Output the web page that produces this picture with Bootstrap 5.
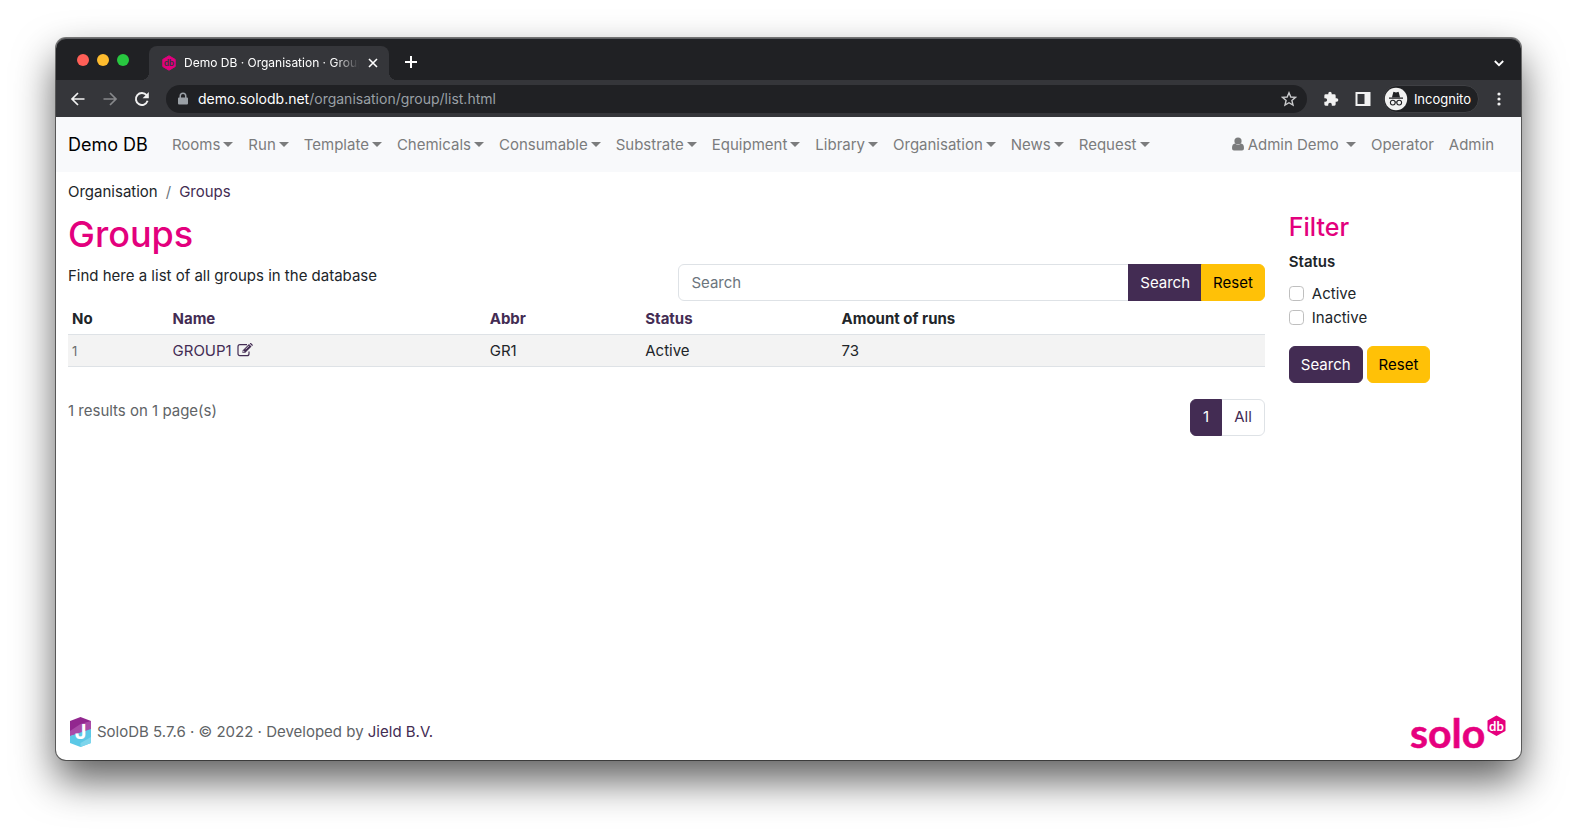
<!DOCTYPE html>
<html lang="en">
<head>
<meta charset="utf-8">
<meta name="viewport" content="width=device-width, initial-scale=1">
<title>Demo DB · Organisation · Groups</title>
<link href="https://cdn.jsdelivr.net/npm/bootstrap@5.3.0/dist/css/bootstrap.min.css" rel="stylesheet">
<style>
:root{--plum:#432c53;--pink:#e3007d}
body{font-family:Inter,"Liberation Sans",sans-serif;font-size:15px;line-height:24px;color:#212529;background:#fff}
.stage{min-height:100vh;padding:38px 56px 74px}
.window{border-radius:10px;background:#fff;box-shadow:0 0 0 1px rgba(0,0,0,.5),0 20px 40px rgba(0,0,0,.64)}
.chrome-ui{border-radius:10px 10px 0 0;background:#202124;color:#fff;box-shadow:inset 0 1px 0 #5f6063}
.chrome-ui button{border:0;background:none;padding:0;color:inherit;display:flex;align-items:center;justify-content:center}
.strip{height:42px;padding:0 14px 0 21px}
.lights{padding-bottom:14px}
.light{width:12px;height:12px;border-radius:50%}
.light-close{background:#ff5f57}.light-min{background:#febc2e}.light-max{background:#28c840}
.tab{position:relative;width:240px;height:34px;background:#35363a;border-radius:8px 8px 0 0;padding:0 10px 0 13px;font-size:12px;margin-left:20px}
.tab::before,.tab::after{content:"";position:absolute;bottom:0;width:8px;height:8px}
.tab::before{left:-8px;background:radial-gradient(circle at 0 0,transparent 8px,#35363a 8px)}
.tab::after{right:-8px;background:radial-gradient(circle at 100% 0,transparent 8px,#35363a 8px)}
.tab-title{-webkit-mask-image:linear-gradient(90deg,#000 86%,transparent);mask-image:linear-gradient(90deg,#000 86%,transparent)}
.toolbar{height:37px;background:#35363a;padding:0 14px;gap:16px}
.omnibox{height:28px;border-radius:14px;background:#202124;padding:0 10px 0 11px;gap:9px;font-size:14px;color:#9aa0a6}
.chrome-ui .incog{height:28px;border-radius:14px;background:#202124;border:1px solid #3f4044;padding-right:7px;gap:6px;font-size:13px}
.tight{margin-left:-4px}
.navbar{background:#f8f9fb;--bs-navbar-color:#7b7c7d;--bs-navbar-hover-color:#555;padding:8px 0 7px}
.navbar-brand{font-size:18px}
.navbar-expand .navbar-nav .nav-link{padding:8px 7px 8px 8px}
.dropdown-toggle::after{margin-left:3px;border-width:5px 5px 0;vertical-align:3px}
a.plum{color:var(--plum);text-decoration:none}
h1,h3{color:var(--pink)}
h1{font-size:36px;line-height:48px;margin-bottom:6px}
h3{font-size:25px;line-height:35px;margin-bottom:5px}
.breadcrumb{--bs-breadcrumb-margin-bottom:6px;padding-top:8px;--bs-breadcrumb-divider-color:#6c757d}
.btn,.form-control,.page-link{font-size:15px;line-height:24px;height:37px;padding:5px 12px}
.btn{padding:5px 11px}
.form-control::placeholder{color:#6c757d}
.btn-plum{--bs-btn-color:#fff;--bs-btn-bg:#432c53;--bs-btn-border-color:#432c53;--bs-btn-hover-bg:#35223f;--bs-btn-hover-color:#fff}
.table{--bs-table-striped-bg:#f3f3f3;margin-bottom:32px}
.table th{font-weight:650}
.table>thead>tr>th{height:33px;padding:5px 4px 3px}
.table>tbody>tr>td{height:32px;padding:4px 4px 3px}
.edit-icon{margin:0 0 2px 1px}
.num{font-size:13px;color:#6c6d6e}
.c-no{width:8.4%}.c-name{width:26.5%}.c-abbr{width:13%}.c-status{width:16.4%}
.grey{color:#606366}
.pagination{--bs-pagination-color:#432c53;--bs-pagination-active-bg:#432c53;--bs-pagination-active-border-color:#432c53}
.form-check{min-height:24px;margin-bottom:0;padding-left:23px}
.form-check .form-check-input{width:15px;height:15px;margin:4px 0 0 -23px;border-color:#bfbfbf}
.footer-bar{padding-bottom:10px}
</style>
</head>
<body>
<div class="stage d-flex flex-column">
<div class="window flex-grow-1 d-flex flex-column">
  <header class="chrome-ui">
    <div class="strip d-flex align-items-end">
      <div class="lights d-flex gap-2"><span class="light light-close"></span><span class="light light-min"></span><span class="light light-max"></span></div>
      <div class="tab d-flex align-items-center">
        <svg class="flex-shrink-0 me-2" width="14" height="16" viewBox="0 0 14 16"><path d="M7 .8 13.2 4.4V11.6L7 15.2.8 11.6V4.4Z" fill="#e3007d" stroke="#e3007d" stroke-linejoin="round"/><text x="7" y="11.2" text-anchor="middle" font-family="Lato" font-weight="700" font-size="9" fill="#35363a">db</text></svg>
        <span class="tab-title flex-grow-1 text-nowrap overflow-hidden">Demo DB · Organisation · Groups</span>
        <button class="ms-2" aria-label="Close tab"><svg width="12" height="12" viewBox="0 0 12 12" stroke="#fff" stroke-width="1.6"><path d="m2 2 8 8M10 2 2 10"/></svg></button>
      </div>
      <button class="ms-3 pb-2 mb-1" aria-label="New tab"><svg width="12" height="12" viewBox="0 0 12 12" stroke="#fff" stroke-width="2"><path d="M6 0v12M0 6h12"/></svg></button>
      <button class="ms-auto pb-2 mb-1" aria-label="Search tabs"><svg width="16" height="12" viewBox="0 0 16 12" fill="none" stroke="#fff" stroke-width="1.8"><path d="m3.800 5 4.200 4.200L12.200 5"/></svg></button>
    </div>
    <div class="toolbar d-flex align-items-center">
      <button aria-label="Back"><svg width="16" height="16" viewBox="0 0 16 16" fill="none" stroke="#f1f1f1" stroke-width="1.7"><path d="M14.500 8H2.500M8 2 2 8l6 6"/></svg></button>
      <button aria-label="Forward"><svg width="16" height="16" viewBox="0 0 16 16" fill="none" stroke="#87888b" stroke-width="1.7"><path d="M1.500 8h12M8 2l6 6-6 6"/></svg></button>
      <button aria-label="Reload"><svg width="16" height="16" viewBox="0 0 16 16" fill="none" stroke="#f1f1f1" stroke-width="1.9"><path d="M13.600 9.800A6 6 0 1 1 12.600 4.200"/><path d="M14.800 1v6.200H8.600Z" fill="#f1f1f1" stroke="none"/></svg></button>
      <div class="omnibox flex-grow-1 d-flex align-items-center">
        <svg width="12" height="14" viewBox="0 0 12 14"><path d="M2.500 5.500V4a3.500 3.500 0 0 1 7 0v1.500h.5q1 0 1 1v5q0 1-1 1H2q-1 0-1-1v-5q0-1 1-1Zm1.500 0h4V4a2 2 0 0 0-4 0Z" fill="#9aa0a6" fill-rule="evenodd"/></svg>
        <span class="flex-grow-1"><span class="text-white">demo.solodb.net</span>/organisation/group/list.html</span>
        <button aria-label="Bookmark"><svg width="16" height="16" viewBox="0 0 16 16" fill="none" stroke="#c9cacc" stroke-width="1.4"><path d="m8 1.800 1.800 4.200 4.700.4-3.600 3.100 1.100 4.600L8 11.700l-4 2.400 1.100-4.600L1.500 6.400 6.200 6Z"/></svg></button>
      </div>
      <button aria-label="Extensions"><svg width="16" height="16" viewBox="0 0 24 24" fill="#f1f1f1"><path d="M20.500 11H19V7a2 2 0 0 0-2-2h-4V3.500a2.500 2.500 0 0 0-5 0V5H4a2 2 0 0 0-2 2v3.800h1.500a2.700 2.700 0 0 1 0 5.400H2V20a2 2 0 0 0 2 2h3.800v-1.500a2.700 2.700 0 0 1 5.400 0V22H17a2 2 0 0 0 2-2v-4h1.500a2.500 2.500 0 0 0 0-5Z"/></svg></button>
      <button aria-label="Side panel"><svg width="16" height="16" viewBox="0 0 16 16"><path fill="#f1f1f1" fill-rule="evenodd" d="M.5 1h15v14H.5ZM2.500 3v10h7V3Z"/></svg></button>
      <button class="tight incog"><svg width="24" height="26" viewBox="1 0 24 26"><circle cx="13" cy="13" r="11.200" fill="#f1f1f1"/><g fill="#202124"><path d="m9 11.200 1.200-4.800q.2-.8 1-.5l1.800.5 1.800-.5q.8-.3 1 .5l1.200 4.800ZM6 11.500h14v1.200H6Z"/></g><g fill="none" stroke="#202124" stroke-width="1.100"><circle cx="9.800" cy="16.600" r="2.400"/><circle cx="16.200" cy="16.600" r="2.400"/><path d="M12.200 16.200q.8-.5 1.600 0"/></g></svg>Incognito</button>
      <button class="tight" aria-label="Menu"><svg width="16" height="16" viewBox="0 0 16 16" fill="#f1f1f1"><circle cx="8" cy="3" r="1.600"/><circle cx="8" cy="8" r="1.600"/><circle cx="8" cy="13" r="1.600"/></svg></button>
    </div>
  </header>

  <nav class="navbar navbar-expand">
    <div class="container-fluid">
      <a class="navbar-brand" href="#">Demo DB</a>
      <ul class="navbar-nav me-auto">
        <li class="nav-item"><a class="nav-link dropdown-toggle" href="#">Rooms</a></li>
        <li class="nav-item"><a class="nav-link dropdown-toggle" href="#">Run</a></li>
        <li class="nav-item"><a class="nav-link dropdown-toggle" href="#">Template</a></li>
        <li class="nav-item"><a class="nav-link dropdown-toggle" href="#">Chemicals</a></li>
        <li class="nav-item"><a class="nav-link dropdown-toggle" href="#">Consumable</a></li>
        <li class="nav-item"><a class="nav-link dropdown-toggle" href="#">Substrate</a></li>
        <li class="nav-item"><a class="nav-link dropdown-toggle" href="#">Equipment</a></li>
        <li class="nav-item"><a class="nav-link dropdown-toggle" href="#">Library</a></li>
        <li class="nav-item"><a class="nav-link dropdown-toggle" href="#">Organisation</a></li>
        <li class="nav-item"><a class="nav-link dropdown-toggle" href="#">News</a></li>
        <li class="nav-item"><a class="nav-link dropdown-toggle" href="#">Request</a></li>
      </ul>
      <ul class="navbar-nav me-2">
        <li class="nav-item"><a class="nav-link dropdown-toggle" href="#"><svg class="me-1 mb-1" width="12" height="14" viewBox="0 0 12 14" fill="currentColor"><circle cx="6" cy="4" r="3.600"/><path d="M3 6.600Q6 9.200 9 6.600q3 .3 3 4.600 0 2.300-2 2.300H2q-2 0-2-2.300 0-4.300 3-4.600Z"/></svg>Admin Demo </a></li>
        <li class="nav-item"><a class="nav-link" href="#">Operator</a></li>
        <li class="nav-item"><a class="nav-link" href="#">Admin</a></li>
      </ul>
    </div>
  </nav>

  <main class="container-fluid flex-grow-1">
    <ol class="breadcrumb">
      <li class="breadcrumb-item">Organisation</li>
      <li class="breadcrumb-item"><a class="plum" href="#">Groups</a></li>
    </ol>
    <div class="row">
      <div class="col-10">
        <h1>Groups</h1>
        <div class="row">
          <div class="col-6"><p class="mb-0">Find here a list of all groups in the database</p></div>
          <div class="col-6">
            <form class="input-group">
              <input type="text" class="form-control" placeholder="Search" aria-label="Search">
              <button type="button" class="btn btn-plum">Search</button>
              <button type="reset" class="btn btn-warning">Reset</button>
            </form>
          </div>
        </div>
        <table class="table table-sm table-striped">
          <colgroup><col class="c-no"><col class="c-name"><col class="c-abbr"><col class="c-status"><col></colgroup>
          <thead><tr><th>No</th><th><a class="plum" href="#">Name</a></th><th><a class="plum" href="#">Abbr</a></th><th><a class="plum" href="#">Status</a></th><th>Amount of runs</th></tr></thead>
          <tbody><tr><td><span class="num">1</span></td>
            <td><a class="plum" href="#">GROUP1</a> <a class="plum" href="#" aria-label="Edit"><svg class="edit-icon" width="16" height="14" viewBox="0 0 16 14" fill="none" stroke="currentColor"><path stroke-width="1.200" d="M12 8.500v2.200q0 2-2 2H3q-2 0-2-2v-7q0-2 2-2h7"/><path fill="currentColor" stroke="none" d="M5.500 7.500 12 1l2.500 2.500L8 10H5.500ZM12.700.5l.7-.5q.4-.2.800.2l1.500 1.500q.4.400 0 .8l-.6.600Z"/><path stroke="#fff" stroke-width=".7" d="m8.500 6.300 3.500-3.500M6.300 7.700v1.300h1.400"/></svg></a></td>
            <td>GR1</td><td>Active</td><td>73</td></tr></tbody>
        </table>
        <div class="d-flex justify-content-between">
          <span class="grey">1 results on 1 page(s)</span>
          <ul class="pagination mb-0">
            <li class="page-item active"><a class="page-link" href="#">1</a></li>
            <li class="page-item"><a class="page-link" href="#">All</a></li>
          </ul>
        </div>
      </div>
      <form class="col-2">
        <h3>Filter</h3>
        <div class="fw-semibold mb-2">Status</div>
        <div class="form-check"><input class="form-check-input" type="checkbox" id="active"><label class="form-check-label" for="active">Active</label></div>
        <div class="form-check mb-3"><input class="form-check-input" type="checkbox" id="inactive"><label class="form-check-label" for="inactive">Inactive</label></div>
        <div class="d-flex gap-1"><button type="button" class="btn btn-plum">Search</button><button type="reset" class="btn btn-warning">Reset</button></div>
      </form>
    </div>
  </main>

  <footer class="footer-bar container-fluid d-flex align-items-center justify-content-between">
    <div class="d-flex align-items-center grey">
      <svg class="me-1" width="25" height="32" viewBox="0 0 25 32"><path d="M2 5 12.500 1 23 5v9L2 20Z" fill="#92278f"/><path d="m12.500 8 10.500-3v9L2 20v-5Z" fill="#a94ba8"/><path d="m2 20 21-7v14l-10.500 4L2 27Z" fill="#5bc8e6"/><path d="m12.500 27 10.500-6v6l-10.500 4Z" fill="#7dd5ec"/><text x="12.500" y="23" text-anchor="middle" font-family="Inter" font-weight="700" font-size="20" fill="#fff">J</text></svg>
      <span>SoloDB 5.7.6 · © 2022 · Developed by <a class="plum" href="#">Jield B.V.</a></span>
    </div>
    <svg class="overflow-visible" width="100" height="36" viewBox="0 0 100 36" fill="#e6007e"><text x="1" y="34" font-family="Lato" font-weight="700" font-size="41" stroke="#e6007e" stroke-width=".5" stroke-linejoin="round">solo</text><path d="m87.500 2.500 8 4.500v9.500l-8 4.500-8-4.500V7Z" stroke="#e6007e" stroke-width="2" stroke-linejoin="round"/><text x="87.500" y="16.500" text-anchor="middle" font-family="Lato" font-weight="700" font-size="13" fill="#fff">db</text></svg>
  </footer>
</div>
</div>
<script src="https://cdn.jsdelivr.net/npm/bootstrap@5.3.0/dist/js/bootstrap.bundle.min.js"></script>
</body>
</html>
